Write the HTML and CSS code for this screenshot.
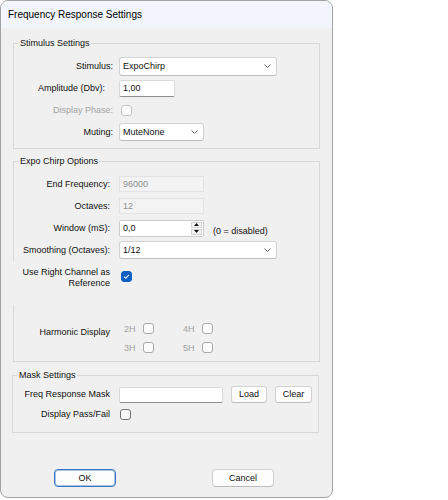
FILE: index.html
```html
<!DOCTYPE html>
<html>
<head>
<meta charset="utf-8">
<title>Frequency Response Settings</title>
<link rel="stylesheet" href="styles.css">
</head>
<body>
<div class="window">
  <div class="titlebar">Frequency Response Settings</div>
  <div class="content">
    <fieldset class="group g1">
      <legend>Stimulus Settings</legend>
      <div class="form f1">
        <div class="lbl">Stimulus:</div>
        <div class="combo c-wide c-tall"><span>ExpoChirp</span><svg class="chev" width="7" height="4" viewBox="0 0 7 4"><polyline points="0.5,0.5 3.5,3.5 6.5,0.5" fill="none" stroke="#5f5f5f" stroke-width="1"/></svg></div>
        <div class="lbl pr8">Amplitude (Dbv):</div>
        <div class="textbox tb-amp">1,00</div>
        <div class="lbl disabled">Display Phase:</div>
        <div class="cb dis ml2"></div>
        <div class="lbl">Muting:</div>
        <div class="combo c-mute"><span>MuteNone</span><svg class="chev" width="7" height="4" viewBox="0 0 7 4"><polyline points="0.5,0.5 3.5,3.5 6.5,0.5" fill="none" stroke="#5f5f5f" stroke-width="1"/></svg></div>
      </div>
    </fieldset>

    <fieldset class="group g2">
      <legend>Expo Chirp Options</legend>
      <div class="form f2">
        <div class="lbl">End Frequency:</div>
        <div class="dis-box">96000</div>
        <div class="lbl">Octaves:</div>
        <div class="dis-box">12</div>
        <div class="lbl">Window (mS):</div>
        <div class="win-cell">
          <div class="numeric">
            <span class="num-val">0,0</span>
            <span class="spin">
              <span class="spin-btn"><svg width="5" height="3" viewBox="0 0 5 3"><polygon points="0,3 2.5,0 5,3" fill="#111"/></svg></span>
              <span class="spin-btn"><svg width="5" height="3" viewBox="0 0 5 3"><polygon points="0,0 2.5,3 5,0" fill="#111"/></svg></span>
            </span>
          </div>
          <span class="note">(0 = disabled)</span>
        </div>
        <div class="lbl">Smoothing (Octaves):</div>
        <div class="combo c-wide"><span>1/12</span><svg class="chev" width="7" height="4" viewBox="0 0 7 4"><polyline points="0.5,0.5 3.5,3.5 6.5,0.5" fill="none" stroke="#5f5f5f" stroke-width="1"/></svg></div>
      </div>
      <div class="rc-row">
        <div class="lbl rc-lbl">Use Right Channel as<br>Reference</div>
        <div class="cb checked"><svg width="9" height="9" viewBox="0 0 9 9"><polyline points="2,4.6 3.8,6.3 7,2.8" fill="none" stroke="#fff" stroke-width="1.1"/></svg></div>
      </div>
      <div class="harm">
        <div class="lbl harm-lbl">Harmonic Display</div>
        <div class="hgrid">
          <div class="hcell"><span class="htxt">2H</span><span class="cb hcb"></span></div>
          <div class="hcell"><span class="htxt">4H</span><span class="cb hcb"></span></div>
          <div class="hcell"><span class="htxt">3H</span><span class="cb hcb"></span></div>
          <div class="hcell"><span class="htxt">5H</span><span class="cb hcb"></span></div>
        </div>
      </div>
    </fieldset>

    <fieldset class="group g3">
      <legend>Mask Settings</legend>
      <div class="form f3">
        <div class="lbl">Freq Response Mask</div>
        <div class="mask-cell">
          <div class="textbox tb-mask"></div>
          <div class="sbtn b-load">Load</div>
          <div class="sbtn b-clear">Clear</div>
        </div>
        <div class="lbl">Display Pass/Fail</div>
        <div class="cb ml1"></div>
      </div>
    </fieldset>

    <div class="footer">
      <div class="btn default">OK</div>
      <div class="btn">Cancel</div>
    </div>
  </div>
</div>
</body>
</html>
```

FILE: styles.css
```css
* { box-sizing: border-box; }
body {
  margin: 0;
  background: #ffffff;
  font-family: "Liberation Sans", Arial, sans-serif;
  font-size: 9px;
  color: #111;
}
.window {
  width: 333px;
  height: 498px;
  border: 1px solid #a2a2a2;
  border-radius: 8px;
  background: #f0f0f0;
  overflow: hidden;
  display: flex;
  flex-direction: column;
}
.titlebar {
  height: 27px;
  flex: none;
  background: #f2f6fc;
  display: flex;
  align-items: center;
  padding-left: 7px;
  font-size: 10px;
  color: #000;
}
.content { flex: 1; }

.group {
  margin: 0 0 0 12px;
  width: 307px;
  min-width: 0;
  border: 1px solid #d8d8d8;
  padding: 0 5px;
}
.group legend {
  padding: 0 1px;
  line-height: 12px;
  font-size: 9px;
  color: #111;
}
.g1 { margin-top: 9px; padding-top: 6px; padding-bottom: 5px; }
.g2 { margin-top: 6px; padding-top: 6px; padding-bottom: 4px; }
.g3 { margin-top: 7px; margin-left: 11px; padding-top: 3px; padding-bottom: 8px; }

.form {
  display: grid;
  align-items: center;
  justify-items: start;
}
.f1 { grid-template-columns: 94px 1fr; column-gap: 6px; grid-auto-rows: 22px; }
.f2 { grid-template-columns: 91px 1fr; column-gap: 9px; grid-auto-rows: 22px; }
.f3 { grid-template-columns: 92px 1fr; column-gap: 9px; grid-auto-rows: 20px; }

.lbl {
  justify-self: end;
  text-align: right;
  line-height: 11px;
  white-space: nowrap;
}
.pr8 { padding-right: 8px; }
.disabled { color: #a3a3a3; }

.combo {
  display: flex;
  align-items: center;
  justify-content: space-between;
  background: #fff;
  border: 1px solid #d3d3d3;
  border-bottom-color: #bcbcbc;
  border-radius: 3px;
  padding: 0 5px 0 3px;
  height: 18px;
}
.c-wide { width: 158px; }
.c-tall { height: 19px; }
.c-mute { width: 85px; }
.chev { display: block; }

.textbox {
  display: flex;
  align-items: center;
  background: #fff;
  border: 1px solid #dadada;
  border-bottom-color: #8e8e8e;
  border-radius: 2px;
  padding: 0 3px;
  height: 17px;
}
.tb-amp { width: 56px; }

.dis-box {
  width: 85px;
  height: 16px;
  background: #f3f3f3;
  border: 1px solid #e3e3e3;
  color: #8d8d8d;
  padding-left: 3px;
  display: flex;
  align-items: center;
}

.win-cell { display: flex; align-items: center; gap: 9px; }
.numeric {
  width: 85px;
  height: 17px;
  display: flex;
  background: #fff;
  border: 1px solid #cdcdcd;
  border-radius: 2px;
}
.num-val { flex: 1; display: flex; align-items: center; padding-left: 3px; }
.spin {
  width: 12px;
  display: flex;
  flex-direction: column;
  padding: 1px 1px 1px 0;
  gap: 1px;
}
.spin-btn {
  flex: 1;
  display: flex;
  align-items: center;
  justify-content: center;
  background: #f4f4f4;
  border: 1px solid #d4d4d4;
}
.spin-btn svg { display: block; }
.note { margin-top: 6px; }

.cb {
  width: 11px;
  height: 11px;
  border: 1px solid #747474;
  border-radius: 3px;
  background: #fbfbfb;
  display: flex;
  align-items: center;
  justify-content: center;
}
.cb.dis { border-color: #c6c6c6; }
.ml2 { margin-left: 2px; }
.ml1 { margin-left: 1px; }
.cb.checked { background: #0f5fc2; border-color: #0f5fc2; }
.cb.checked svg { display: block; }

.rc-row {
  margin-left: -7px;
  background: #f0f0f0;
  height: 44px;
  padding-top: 6px;
  display: grid;
  grid-template-columns: 98px 1fr;
  column-gap: 11px;
  align-items: start;
  justify-items: start;
}
.rc-lbl { line-height: 11px; }
.rc-row .cb { margin-top: 4px; }

.harm {
  margin-top: 14px;
  display: grid;
  grid-template-columns: 91px 1fr;
  column-gap: 9px;
  align-items: start;
}
.harm-lbl { padding-top: 8px; }
.hgrid {
  display: grid;
  grid-template-columns: 59px auto;
  grid-auto-rows: 19px;
  align-items: center;
  padding-left: 5px;
}
.hcell { display: flex; align-items: center; gap: 6px; }
.htxt { width: 13px; color: #a0a0a0; }
.hcb { border-color: #a9a9a9; }

.mask-cell { display: flex; align-items: center; }
.tb-mask { width: 104px; height: 16px; margin-top: 2px; }
.sbtn {
  height: 17px;
  display: flex;
  align-items: center;
  justify-content: center;
  background: #fdfdfd;
  border: 1px solid #d2d2d2;
  border-bottom-color: #bdbdbd;
  border-radius: 3px;
  margin-left: 8px;
}
.b-load { width: 36px; }
.b-clear { width: 37px; }

.footer {
  display: flex;
  margin-top: 36px;
  padding-left: 53px;
  gap: 96px;
}
.btn {
  width: 62px;
  height: 18px;
  display: flex;
  align-items: center;
  justify-content: center;
  background: #fdfdfd;
  border: 1px solid #d0d0d0;
  border-bottom-color: #bababa;
  border-radius: 4px;
}
.btn.default {
  border: 1px solid #3a76c2;
  box-shadow: inset 0 0 0 1px #a9c3e4;
}
```
